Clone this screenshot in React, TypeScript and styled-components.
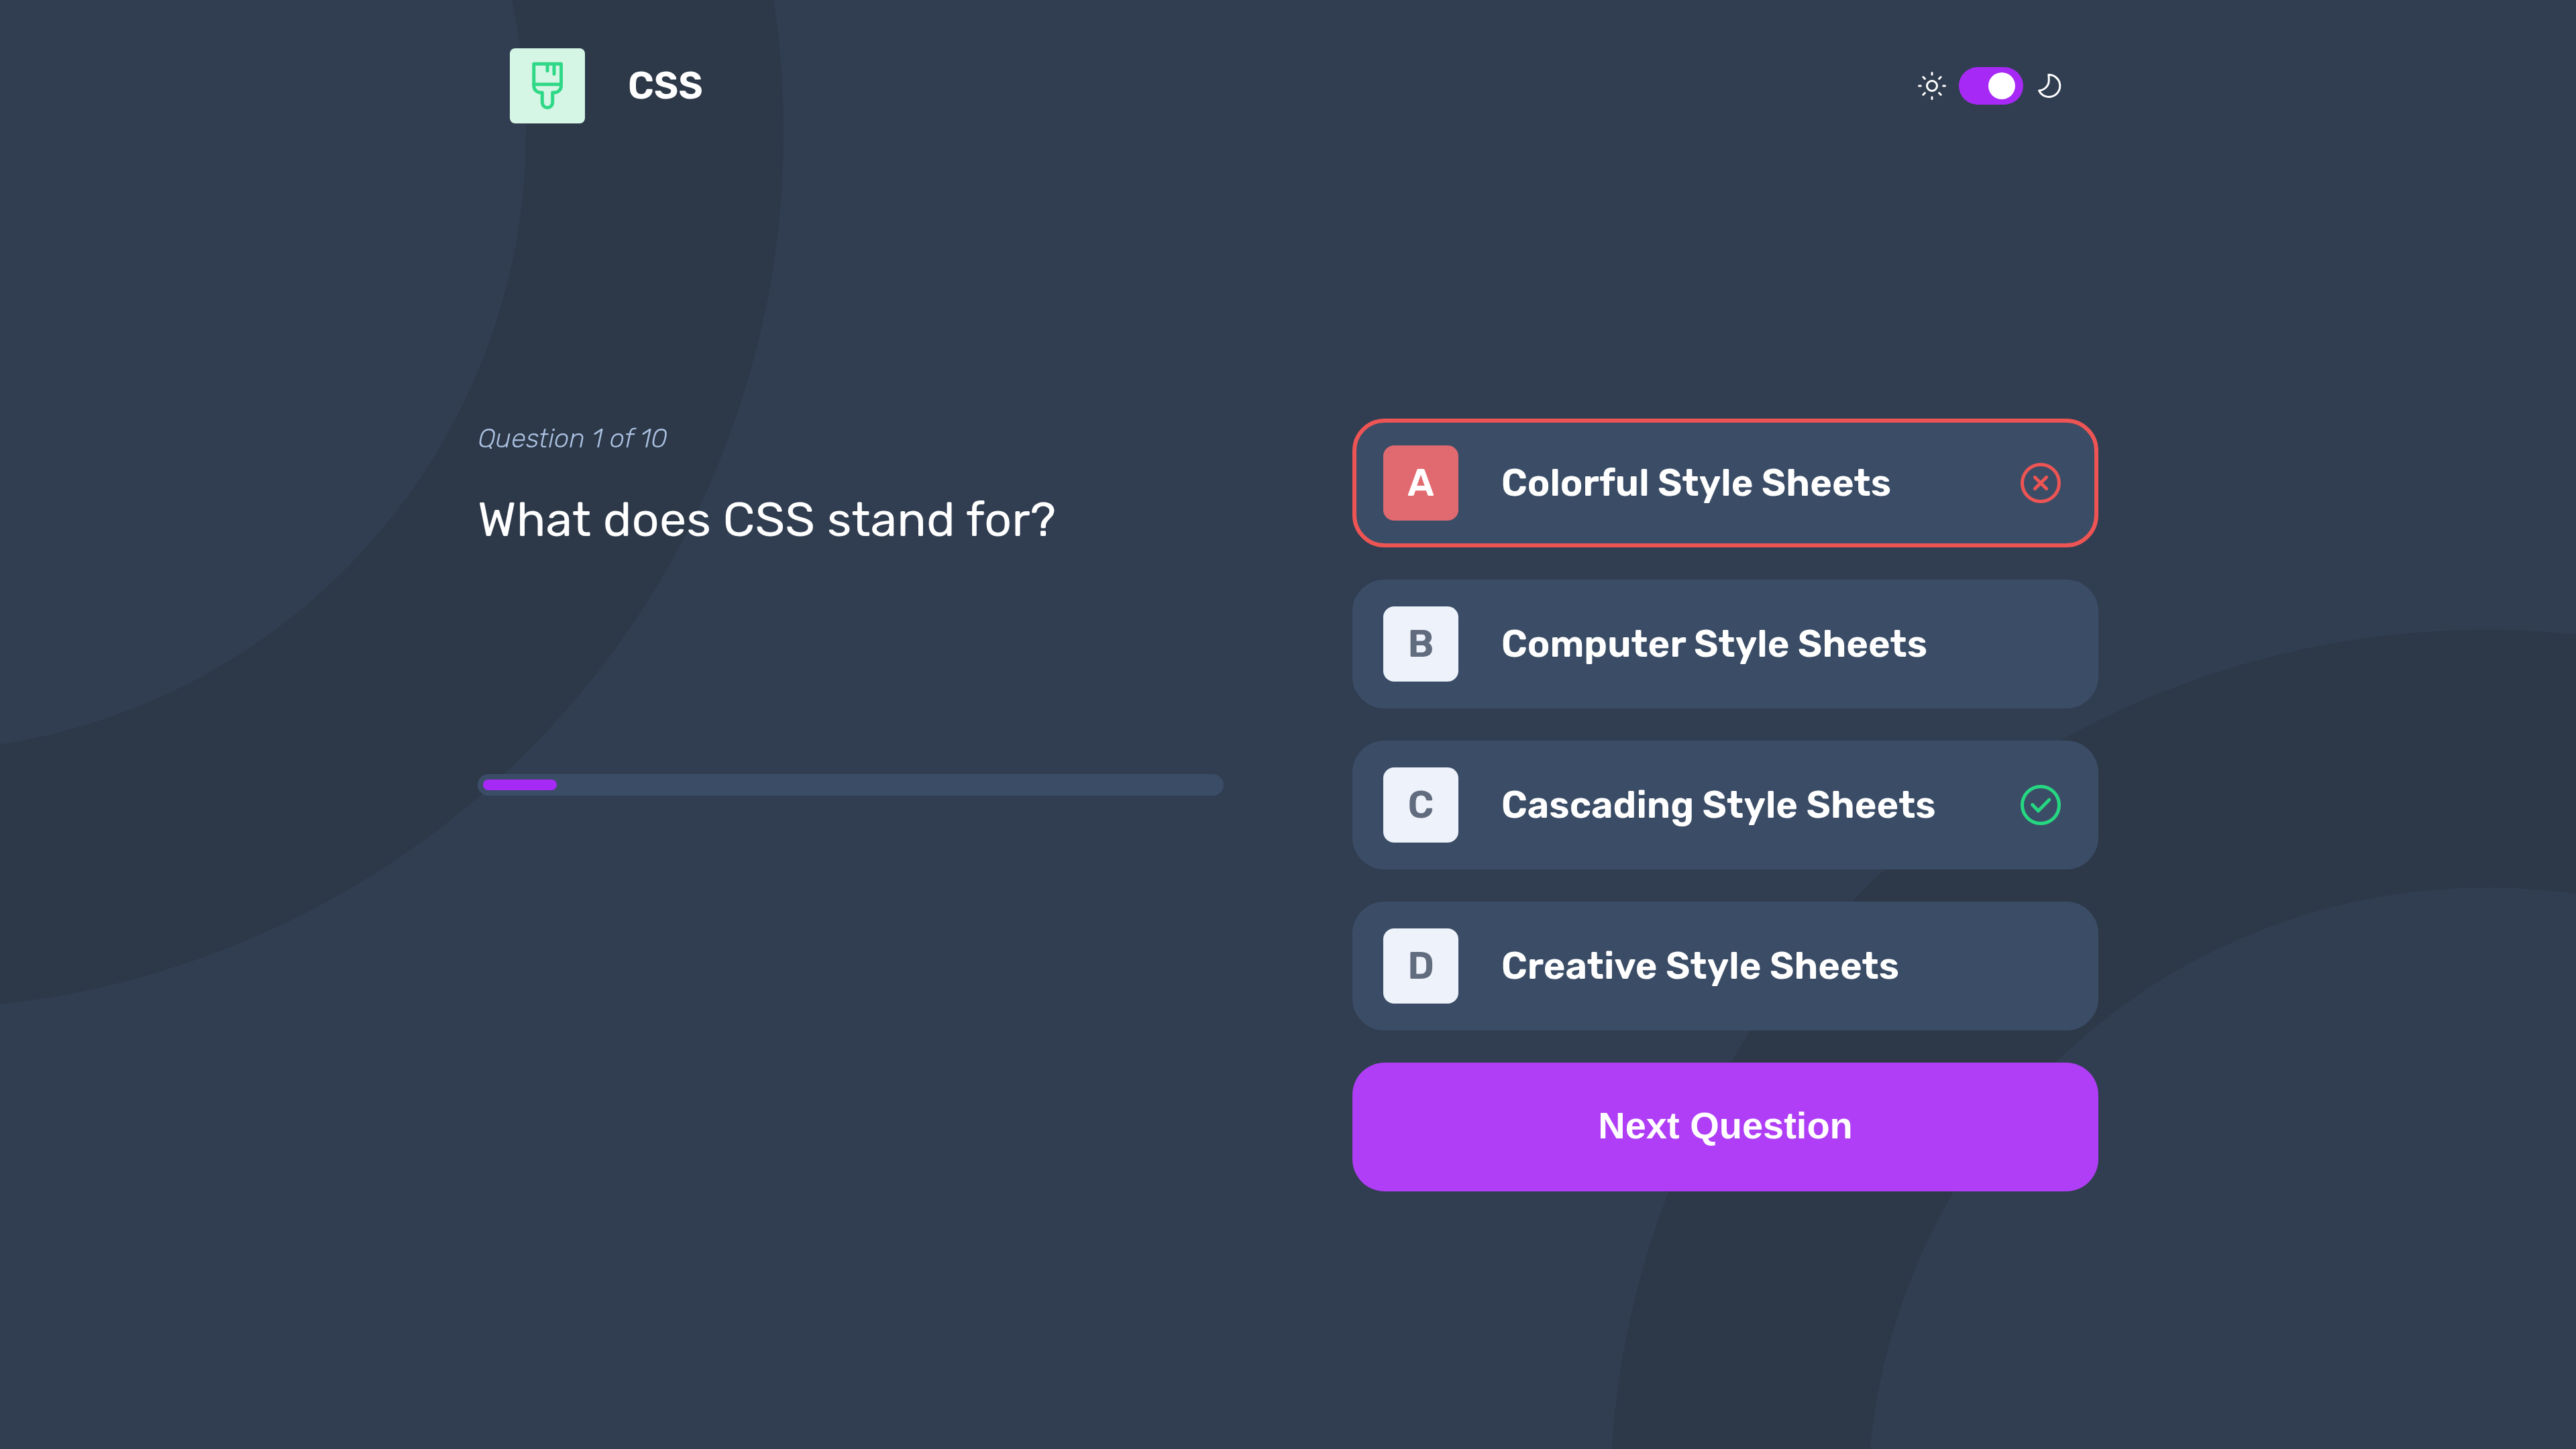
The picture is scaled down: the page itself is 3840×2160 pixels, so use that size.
import React, { useState } from "react";
import styled, { createGlobalStyle } from "styled-components";

const color = {
  page: "#313E51",
  ring: "#2D3949",
  card: "#3B4D66",
  purple: "#A729F5",
  purpleLight: "#AF3EF6",
  muted: "#ABC1E1",
  badge: "#EEF2FA",
  badgeText: "#626C7F",
  red: "#EE5454",
  redSoft: "#E16A70",
  green: "#26D782",
  mint: "#D5F6E5",
  white: "#FFFFFF",
};

const textFont = `Rubik, Inter, "Liberation Sans", sans-serif`;

const GlobalStyle = createGlobalStyle`
  *, *::before, *::after { box-sizing: border-box; }
  html { background: ${color.page}; }
  body {
    margin: 0;
    color: ${color.white};
    font-family: ${textFont};
  }
  h1, p, ul { margin: 0; padding: 0; }
`;

const Backdrop = styled.svg`
  position: fixed;
  inset: 0;
  z-index: -1;
  width: 100%;
  height: 100%;
`;

const Page = styled.div`
  width: min(2416px, 100% - 96px);
  margin: 0 auto;
  padding: 72px 0;
`;

const Header = styled.header`
  display: flex;
  align-items: center;
  justify-content: space-between;
  padding: 0 48px;
`;

const Subject = styled.div`
  display: flex;
  align-items: center;
  gap: 64px;
  font-size: 56px;
  line-height: 66px;
  font-weight: 600;
`;

const SubjectIcon = styled.span`
  display: flex;
  width: 112px;
  height: 112px;
  border-radius: 8px;
  background: ${color.mint};
`;

const ThemeSwitch = styled.label`
  display: flex;
  align-items: center;
  gap: 16px;
`;

const Toggle = styled.input`
  appearance: none;
  display: flex;
  align-items: center;
  justify-content: flex-start;
  width: 96px;
  height: 56px;
  margin: 0;
  padding: 0 12px;
  border-radius: 28px;
  background: ${color.purple};
  cursor: pointer;

  &::before {
    content: "";
    width: 40px;
    height: 40px;
    border-radius: 50%;
    background: ${color.white};
  }

  &:checked {
    justify-content: flex-end;
  }
`;

const Quiz = styled.main`
  display: grid;
  grid-template-columns: 1fr 1fr;
  align-items: start;
  gap: 192px;
  margin-top: 440px;
`;

const Prompt = styled.section`
  display: flex;
  flex-direction: column;
`;

const Step = styled.p`
  margin-bottom: 48px;
  color: ${color.muted};
  font-size: 40px;
  line-height: 60px;
  font-style: italic;
  font-weight: 300;
`;

const Question = styled.h1`
  font-size: 72px;
  line-height: 86px;
  font-weight: 400;
`;

const ProgressTrack = styled.div`
  display: flex;
  height: 32px;
  margin-top: 336px;
  padding: 8px;
  border-radius: 16px;
  background: ${color.card};
`;

const ProgressFill = styled.div`
  border-radius: 8px;
  background: ${color.purple};
`;

const Answers = styled.section`
  display: flex;
  flex-direction: column;
  gap: 48px;
`;

const OptionList = styled.ul`
  display: flex;
  flex-direction: column;
  gap: 48px;
  list-style: none;
`;

const Option = styled.button<{ $wrong?: boolean }>`
  display: flex;
  align-items: center;
  gap: 64px;
  width: 100%;
  height: 192px;
  padding: 0 40px;
  border: 6px solid ${(p) => (p.$wrong ? color.red : color.card)};
  border-radius: 48px;
  background: ${color.card};
  color: ${color.white};
  font-family: ${textFont};
  font-size: 56px;
  line-height: 66px;
  font-weight: 600;
  text-align: left;
  cursor: pointer;
`;

const Letter = styled.span<{ $wrong?: boolean }>`
  display: flex;
  flex: none;
  align-items: center;
  justify-content: center;
  width: 112px;
  height: 112px;
  border-radius: 16px;
  background: ${(p) => (p.$wrong ? color.redSoft : color.badge)};
  color: ${(p) => (p.$wrong ? color.white : color.badgeText)};
`;

const OptionText = styled.span`
  flex: 1;
`;

const NextButton = styled.button`
  height: 192px;
  padding: 0 40px 4px;
  border: 0;
  border-radius: 48px;
  background: ${color.purpleLight};
  color: ${color.white};
  font-family: "Liberation Sans", Arial, sans-serif;
  font-size: 56px;
  line-height: 66px;
  font-weight: 700;
  cursor: pointer;
`;

function Rings() {
  return (
    <Backdrop viewBox="0 0 3840 2160" preserveAspectRatio="xMidYMid slice" aria-hidden="true">
      <g fill="none" stroke={color.ring} strokeWidth="384">
        <circle cx="-139" cy="197" r="1115" />
        <circle cx="3707" cy="2246" r="1115" />
      </g>
    </Backdrop>
  );
}

function BrushIcon() {
  return (
    <svg width="112" height="112" viewBox="0 0 112 112" fill="none" stroke="#2FD887" strokeWidth="5" strokeLinecap="round" strokeLinejoin="round" aria-hidden="true">
      <path d="M35.8 23.2H76.5V56a10 10 0 0 1-10 10H63.7V80.8a7.7 7.7 0 0 1-15.4 0V66H45.8a10 10 0 0 1-10-10Z" />
      <path d="M35.8 53.7H76.5M56 23.2V33.5M66 23.2V38.2" />
    </svg>
  );
}

function SunIcon() {
  return (
    <svg width="48" height="48" viewBox="0 0 48 48" fill="none" stroke={color.white} strokeWidth="3" strokeLinecap="round" aria-hidden="true">
      <circle cx="24" cy="24" r="7.5" />
      <path d="M24 4.5V7.3M24 40.7V43.5M4.5 24H7.3M40.7 24H43.5M10.8 10.8L13.4 13.4M34.6 34.6L37.2 37.2M37.2 10.8L34.6 13.4M13.4 34.6L10.8 37.2" />
    </svg>
  );
}

function MoonIcon() {
  return (
    <svg width="48" height="48" viewBox="0 0 48 48" fill="none" stroke={color.white} strokeWidth="3" strokeLinejoin="round" aria-hidden="true">
      <path d="M21.8 7.6A16.4 16.4 0 1 1 7.6 31.1C16 30 22 24 22.2 16.5C22.3 13 22.2 10 21.8 7.6Z" />
    </svg>
  );
}

function WrongIcon() {
  return (
    <svg width="80" height="80" viewBox="0 0 40 40" fill="none" stroke={color.red} strokeWidth="2.5" strokeLinecap="round" role="img" aria-label="Incorrect">
      <circle cx="20" cy="20" r="13.75" />
      <path d="M15.7 15.7L24.3 24.3M24.3 15.7L15.7 24.3" />
    </svg>
  );
}

function CorrectIcon() {
  return (
    <svg width="80" height="80" viewBox="0 0 40 40" fill="none" stroke={color.green} strokeWidth="2.5" strokeLinecap="round" strokeLinejoin="round" role="img" aria-label="Correct">
      <circle cx="20" cy="20" r="13.75" />
      <path d="M13.8 19.8L18.2 24.4L26.4 16.1" />
    </svg>
  );
}

type Result = "wrong" | "correct";

const options: { letter: string; text: string; result?: Result }[] = [
  { letter: "A", text: "Colorful Style Sheets", result: "wrong" },
  { letter: "B", text: "Computer Style Sheets" },
  { letter: "C", text: "Cascading Style Sheets", result: "correct" },
  { letter: "D", text: "Creative Style Sheets" },
];

const step = 1;
const total = 10;

export default function App() {
  const [dark, setDark] = useState(true);

  return (
    <>
      <GlobalStyle />
      <Rings />
      <Page>
        <Header>
          <Subject>
            <SubjectIcon>
              <BrushIcon />
            </SubjectIcon>
            CSS
          </Subject>
          <ThemeSwitch>
            <SunIcon />
            <Toggle
              type="checkbox"
              role="switch"
              aria-label="Dark mode"
              checked={dark}
              onChange={(e) => setDark(e.target.checked)}
            />
            <MoonIcon />
          </ThemeSwitch>
        </Header>
        <Quiz>
          <Prompt>
            <Step>
              Question {step} of {total}
            </Step>
            <Question>What does CSS stand for?</Question>
            <ProgressTrack role="progressbar" aria-label="Quiz progress" aria-valuenow={step} aria-valuemin={0} aria-valuemax={total}>
              <ProgressFill style={{ width: `${(step / total) * 100}%` }} />
            </ProgressTrack>
          </Prompt>
          <Answers>
            <OptionList>
              {options.map(({ letter, text, result }) => (
                <li key={letter}>
                  <Option type="button" $wrong={result === "wrong"}>
                    <Letter $wrong={result === "wrong"}>{letter}</Letter>
                    <OptionText>{text}</OptionText>
                    {result === "wrong" && <WrongIcon />}
                    {result === "correct" && <CorrectIcon />}
                  </Option>
                </li>
              ))}
            </OptionList>
            <NextButton type="button">Next Question</NextButton>
          </Answers>
        </Quiz>
      </Page>
    </>
  );
}
